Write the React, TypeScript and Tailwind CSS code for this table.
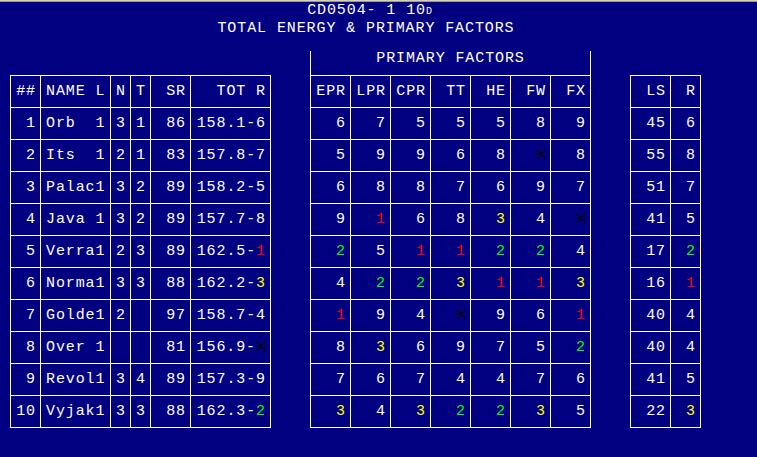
import React from "react";

type Val = string | number;

const leftRows: Val[][] = [
  [1, "Orb  1", 3, 1, 86, "158.1-6"],
  [2, "Its  1", 2, 1, 83, "157.8-7"],
  [3, "Palac1", 3, 2, 89, "158.2-5"],
  [4, "Java 1", 3, 2, 89, "157.7-8"],
  [5, "Verra1", 2, 3, 89, "162.5-1"],
  [6, "Norma1", 3, 3, 88, "162.2-3"],
  [7, "Golde1", 2, "", 97, "158.7-4"],
  [8, "Over 1", "", "", 81, "156.9-X"],
  [9, "Revol1", 3, 4, 89, "157.3-9"],
  [10, "Vyjak1", 3, 3, 88, "162.3-2"],
];

const factorRows: Val[][] = [
  [6, 7, 5, 5, 5, 8, 9],
  [5, 9, 9, 6, 8, "X", 8],
  [6, 8, 8, 7, 6, 9, 7],
  [9, 1, 6, 8, 3, 4, "X"],
  [2, 5, 1, 1, 2, 2, 4],
  [4, 2, 2, 3, 1, 1, 3],
  [1, 9, 4, "X", 9, 6, 1],
  [8, 3, 6, 9, 7, 5, 2],
  [7, 6, 7, 4, 4, 7, 6],
  [3, 4, 3, 2, 2, 3, 5],
];

const rightRows: Val[][] = [
  [45, 6],
  [55, 8],
  [51, 7],
  [41, 5],
  [17, 2],
  [16, 1],
  [40, 4],
  [40, 4],
  [41, 5],
  [22, 3],
];

// black cross used where a value is missing
const Cross: React.FC = () => (
  <svg width="10" height="10" viewBox="0 0 10 10" className="inline-block align-baseline">
    <line x1="0.5" y1="0.5" x2="9.5" y2="9.5" stroke="#000000" strokeWidth="1.1" />
    <line x1="9.5" y1="0.5" x2="0.5" y2="9.5" stroke="#000000" strokeWidth="1.1" />
  </svg>
);

// 1 red, 2 green, 3 yellow
const Rank: React.FC<{ v: Val }> = ({ v }) => {
  if (v === "X") return <Cross />;
  if (v === 1 || v === "1") return <span className="text-[#ff0000]">1</span>;
  if (v === 2 || v === "2") return <span className="text-[#00ff00]">2</span>;
  if (v === 3 || v === "3") return <span className="text-[#ffff00]">3</span>;
  return <span>{v}</span>;
};

const Cell: React.FC<{ children?: React.ReactNode; left?: boolean }> = ({ children, left }) => (
  <div
    className={`bg-[#000080] leading-[31px] whitespace-pre overflow-hidden ${
      left ? "text-left pl-[5px]" : "text-right pr-[4px]"
    }`}
  >
    {children}
  </div>
);

const TotR: React.FC<{ v: string }> = ({ v }) => {
  const [head, tail] = v.split("-");
  return (
    <>
      {head}-<Rank v={tail} />
    </>
  );
};

export default function App() {
  return (
    <div className="w-[757px] h-[457px] bg-[#000080] text-white font-['Liberation_Mono',monospace] text-[15px] tracking-[0.9px] overflow-hidden">
      <div className="h-px bg-[#d4d0c8]" />
      <div className="h-px bg-[#a09c94]" />

      {/* Title */}
      <div className="w-[732px] h-[49px] text-center leading-[17px]">
        <div className="pl-[8px]">
          CD0504- 1 10<span className="text-[10px]">D</span>
        </div>
        <div>TOTAL ENERGY &amp; PRIMARY FACTORS</div>
      </div>

      <div className="flex items-end pl-[10px]">
        {/* Main table */}
        <div className="grid grid-cols-[29px_69px_19px_19px_39px_79px] auto-rows-[31px] gap-px bg-white p-px">
          <Cell>##</Cell>
          <Cell left>NAME L</Cell>
          <Cell>N</Cell>
          <Cell left>T</Cell>
          <Cell>SR</Cell>
          <Cell>TOT R</Cell>
          {leftRows.map((r, i) => (
            <React.Fragment key={i}>
              <Cell>{r[0]}</Cell>
              <Cell left>{r[1]}</Cell>
              <Cell>{r[2]}</Cell>
              <Cell>{r[3]}</Cell>
              <Cell>{r[4]}</Cell>
              <Cell>
                <TotR v={String(r[5])} />
              </Cell>
            </React.Fragment>
          ))}
        </div>

        {/* Primary factors */}
        <div className="ml-[39px] flex flex-col">
          <div className="h-[24px] border-x border-white text-center leading-[15px]">PRIMARY FACTORS</div>
          <div className="grid grid-cols-[39px_39px_39px_39px_39px_39px_39px] auto-rows-[31px] gap-px bg-white p-px">
            {["EPR", "LPR", "CPR", "TT", "HE", "FW", "FX"].map((h) => (
              <Cell key={h}>{h}</Cell>
            ))}
            {factorRows.map((r, i) => (
              <React.Fragment key={i}>
                {r.map((v, j) => (
                  <Cell key={j}>
                    <Rank v={v} />
                  </Cell>
                ))}
              </React.Fragment>
            ))}
          </div>
        </div>

        {/* LS / R */}
        <div className="ml-[39px] grid grid-cols-[39px_29px] auto-rows-[31px] gap-px bg-white p-px">
          <Cell>LS</Cell>
          <Cell>R</Cell>
          {rightRows.map((r, i) => (
            <React.Fragment key={i}>
              <Cell>{r[0]}</Cell>
              <Cell>
                <Rank v={r[1]} />
              </Cell>
            </React.Fragment>
          ))}
        </div>
      </div>
    </div>
  );
}
